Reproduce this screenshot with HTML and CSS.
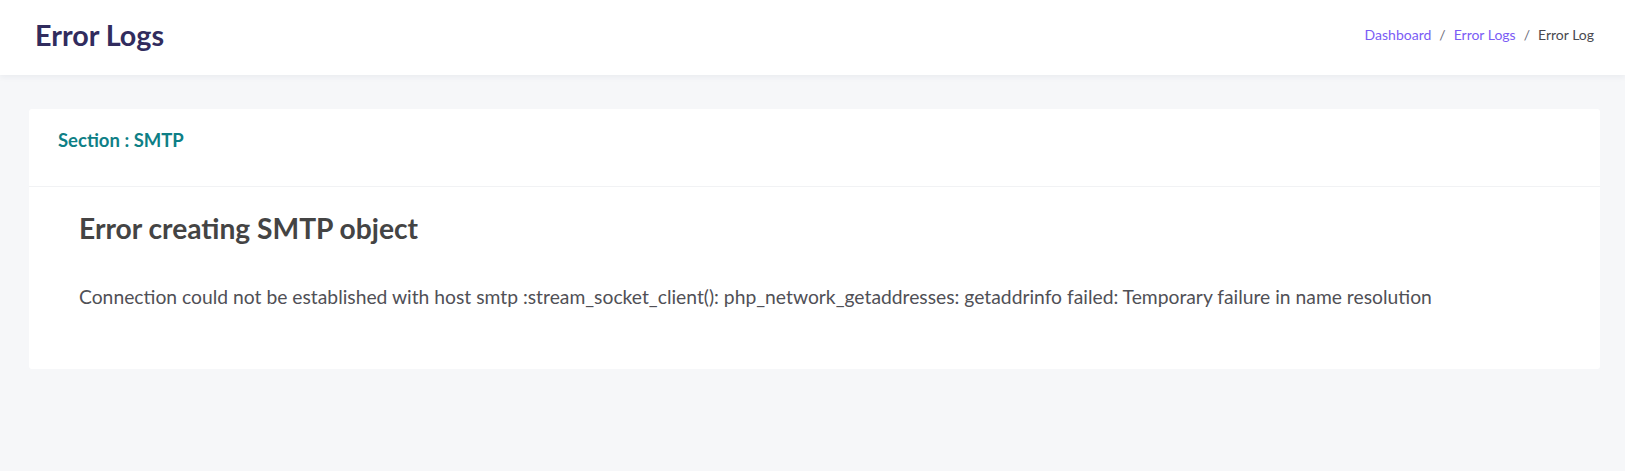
FILE: index.html
```html
<!DOCTYPE html>
<html lang="en">
<head>
<meta charset="utf-8">
<title>Error Logs</title>
<link rel="stylesheet" href="styles.css">
</head>
<body>
<header class="topbar">
  <h1 class="page-title">Error Logs</h1>
  <nav class="breadcrumb">
    <a href="#" class="crumb-link">Dashboard</a>
    <span class="crumb-sep">/</span>
    <a href="#" class="crumb-link">Error Logs</a>
    <span class="crumb-sep">/</span>
    <span class="crumb-current">Error Log</span>
  </nav>
</header>
<main class="content">
  <section class="card">
    <div class="card-header">
      <h2 class="section-title">Section : SMTP</h2>
    </div>
    <div class="card-body">
      <h3 class="error-title">Error creating SMTP object</h3>
      <p class="error-message">Connection could not be established with host smtp :stream_socket_client(): php_network_getaddresses: getaddrinfo failed: Temporary failure in name resolution</p>
    </div>
  </section>
</main>
</body>
</html>
```
FILE: styles.css
```css
* { box-sizing: border-box; }
html, body { margin: 0; padding: 0; }
body {
  background: #f6f7f9;
  font-family: Lato, "Noto Sans", sans-serif;
  color: #4b4b4b;
  min-height: 471px;
}
.topbar {
  height: 75px;
  background: #ffffff;
  display: flex;
  align-items: center;
  justify-content: space-between;
  padding: 0 31px 6px 35px;
  box-shadow: 0 2px 6px rgba(40, 50, 80, 0.06);
  position: relative;
}
.page-title {
  margin: 0;
  font-size: 28.7px;
  font-weight: 700;
  color: #312c5e;
}
.breadcrumb {
  display: flex;
  align-items: center;
  gap: 8px;
  font-size: 14px;
}
.crumb-link { color: #7b5cf5; text-decoration: none; }
.crumb-sep { color: #6c6c7a; }
.crumb-current { color: #4a4a50; }
.content {
  padding: 34px 25px 0 29px;
}
.card {
  background: #ffffff;
  border-radius: 3px;
}
.card-header {
  height: 78px;
  padding: 20px 29px 0;
  border-bottom: 1px solid #f1f2f4;
}
.section-title {
  margin: 0;
  font-size: 18.5px;
  line-height: 22px;
  font-weight: 700;
  color: #0e7f86;
}
.card-body {
  padding: 24px 50px 61px;
}
.error-title {
  margin: 0;
  font-size: 28.2px;
  font-weight: 700;
  color: #444444;
}
.error-message {
  margin: 40px 0 0;
  font-size: 19.3px;
  color: #505056;
}
```
